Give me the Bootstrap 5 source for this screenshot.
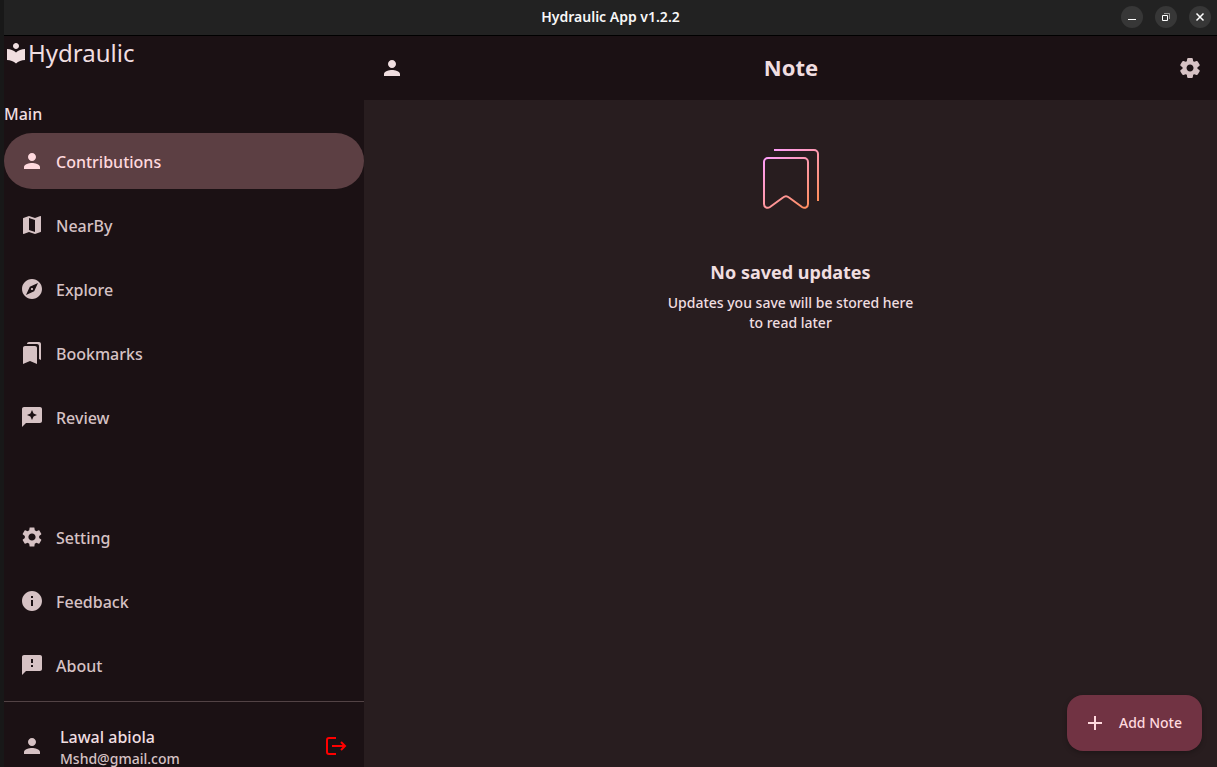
<!DOCTYPE html>
<html lang="en">
<head>
<meta charset="utf-8">
<meta name="viewport" content="width=device-width, initial-scale=1">
<title>Hydraulic App v1.2.2</title>
<link href="https://cdn.jsdelivr.net/npm/bootstrap@5.3.0/dist/css/bootstrap.min.css" rel="stylesheet">
<style>
  body { font-family: "Noto Sans", sans-serif; background: #181818; color: #f0dee0; }
  button { color: inherit; }
  svg { display: block; flex: none; }
  .ico { width: 24px; height: 24px; fill: currentColor; }
  .titlebar { height: 36px; padding-bottom: 2px; background: #222; border-bottom: 1px solid #000; color: #f7f7f7; margin-left: 4px; }
  .titlebar h1 { font-size: 14px; line-height: 20px; font-weight: 600; }
  .win-buttons { right: 6px; gap: 12px; }
  .win-btn { width: 22px; height: 22px; background: #373737; color: #fff; }
  .win-btn svg { width: 22px; height: 22px; fill: none; stroke: currentColor; }
  .shell { margin-left: 4px; min-height: 0; }
  .sidebar { width: 360px; background: #1b1114; }
  .brand { font-size: 24px; line-height: 32px; height: 66px; padding-top: 1px; }
  .brand .ico { margin-top: 4px; }
  .section-name { font-size: 16px; line-height: 24px; font-weight: 500; margin-bottom: 7px; }
  .side-nav { gap: 8px; }
  .side-nav .nav-link { height: 56px; padding: 0 16px; gap: 12px; border-radius: 28px; color: #d6c2c4; font-size: 16px; line-height: 24px; font-weight: 500; }
  .side-nav .nav-link.active { background: #5c3f43; color: #ffd9de; }
  .side-nav .nav-link span { padding-top: 2px; }
  .side-nav .group-start { margin-top: 56px; }
  .account { margin-top: 8px; padding: 23px 16px 0; gap: 16px; border-top: 1px solid #524345; color: #d6c2c4; }
  .account .ico { margin-top: 9px; }
  .who { font-size: 16px; line-height: 24px; font-weight: 500; color: #f0dee0; }
  .mail { font-size: 14px; line-height: 20px; font-weight: 500; }
  .logout { color: #f00; }
  .logout svg { fill: none; stroke: currentColor; stroke-width: 2; }
  .topbar { height: 64px; padding: 0 15px 0 16px; background: #1b1114; }
  .topbar h2 { font-size: 22px; line-height: 28px; font-weight: 700; padding-bottom: 2px; }
  .muted-ico { color: #d6c2c4; }
  .content { background: #281d1f; min-width: 0; }
  .empty { padding-top: 48px; }
  .empty svg { width: 58px; height: 62px; fill: none; stroke-width: 2; margin-bottom: 50px; }
  .empty h3 { font-size: 18px; line-height: 24px; font-weight: 700; margin-bottom: 9px; }
  .empty p { font-size: 14px; line-height: 20px; font-weight: 500; max-width: 260px; }
  .add-note { right: 15px; bottom: 16px; height: 56px; padding: 0 20px 0 16px; gap: 12px; border-radius: 16px; background: #713343; color: #ffd9de; font-size: 14px; line-height: 20px; font-weight: 500; box-shadow: 0 2px 5px rgba(0,0,0,.25); }
  .add-note svg { fill: none; stroke: currentColor; stroke-width: 2; }
</style>
</head>
<body class="vh-100 overflow-hidden d-flex flex-column">
<header class="titlebar flex-shrink-0 position-relative d-flex align-items-center justify-content-center">
  <h1 class="m-0">Hydraulic App v1.2.2</h1>
  <div class="win-buttons position-absolute d-flex">
    <button type="button" class="win-btn border-0 p-0 rounded-circle" aria-label="Minimize"><svg viewBox="0 0 22 22"><path d="M7 13.5h8"/></svg></button>
    <button type="button" class="win-btn border-0 p-0 rounded-circle" aria-label="Restore"><svg viewBox="0 0 22 22"><path d="M7.5 9.5h5v5h-5z"/><path d="M9 7.5h5.5V13" stroke="#999"/></svg></button>
    <button type="button" class="win-btn border-0 p-0 rounded-circle" aria-label="Close"><svg viewBox="0 0 22 22"><path d="M7.5 7.5l7 7m0-7l-7 7" stroke-width="1.5"/></svg></button>
  </div>
</header>
<div class="shell d-flex flex-grow-1">
  <aside class="sidebar flex-shrink-0 d-flex flex-column">
    <div class="brand flex-shrink-0 d-flex align-items-start">
      <svg class="ico" viewBox="0 0 24 24"><path d="M12 11.55C9.64 9.35 6.48 8 3 8v11c3.48 0 6.64 1.35 9 3.55 2.36-2.19 5.52-3.55 9-3.55V8c-3.48 0-6.64 1.35-9 3.55zM12 8c1.66 0 3-1.34 3-3s-1.34-3-3-3-3 1.34-3 3 1.34 3 3 3z"/></svg>
      <span>Hydraulic</span>
    </div>
    <div class="section-name">Main</div>
    <nav class="side-nav nav flex-column flex-nowrap flex-shrink-0" aria-label="Main">
      <a class="nav-link active d-flex align-items-center" href="#" aria-current="page"><svg class="ico" viewBox="0 0 24 24"><path d="M12 12c2.21 0 4-1.79 4-4s-1.79-4-4-4-4 1.79-4 4 1.79 4 4 4zm0 2c-2.67 0-8 1.34-8 4v2h16v-2c0-2.66-5.33-4-8-4z"/></svg><span>Contributions</span></a>
      <a class="nav-link d-flex align-items-center" href="#"><svg class="ico" viewBox="0 0 24 24"><path d="M20.5 3l-.16.03L15 5.1 9 3 3.36 4.9c-.21.07-.36.25-.36.48V20.5c0 .28.22.5.5.5l.16-.03L9 18.9l6 2.1 5.64-1.9c.21-.07.36-.25.36-.48V3.5c0-.28-.22-.5-.5-.5zM15 19l-6-2.11V5l6 2.11V19z"/></svg><span>NearBy</span></a>
      <a class="nav-link d-flex align-items-center" href="#"><svg class="ico" viewBox="0 0 24 24"><path d="M12 10.9c-.61 0-1.1.49-1.1 1.1s.49 1.1 1.1 1.1c.61 0 1.1-.49 1.1-1.1s-.49-1.1-1.1-1.1zM12 2C6.48 2 2 6.48 2 12s4.48 10 10 10 10-4.48 10-10S17.52 2 12 2zm2.19 12.19L6 18l3.81-8.19L18 6l-3.81 8.19z"/></svg><span>Explore</span></a>
      <a class="nav-link d-flex align-items-center" href="#"><svg class="ico" viewBox="0 0 24 24"><path d="M19 18l2 1V3c0-1.1-.9-2-2-2H8.99C7.89 1 7 1.9 7 3h10c1.1 0 2 .9 2 2v13zM15 5H5c-1.1 0-2 .9-2 2v16l7-3 7 3V7c0-1.1-.9-2-2-2z"/></svg><span>Bookmarks</span></a>
      <a class="nav-link d-flex align-items-center" href="#"><svg class="ico" viewBox="0 0 24 24"><path fill-rule="evenodd" d="M20 2H4c-1.1 0-2 .9-2 2v18l4-4h14c1.1 0 2-.9 2-2V4c0-1.1-.9-2-2-2zM13.57 11.57L12 15l-1.57-3.43L7 10l3.43-1.57L12 5l1.57 3.43L17 10z"/></svg><span>Review</span></a>
      <a class="nav-link group-start d-flex align-items-center" href="#"><svg class="ico" viewBox="0 0 24 24"><path d="M19.14 12.94c.04-.3.06-.61.06-.94 0-.32-.02-.64-.07-.94l2.03-1.58c.18-.14.23-.41.12-.61l-1.92-3.32c-.12-.22-.37-.29-.59-.22l-2.39.96c-.5-.38-1.03-.7-1.62-.94l-.36-2.54c-.04-.24-.24-.41-.48-.41h-3.84c-.24 0-.43.17-.47.41l-.36 2.54c-.59.24-1.13.57-1.62.94l-2.39-.96c-.22-.08-.47 0-.59.22L2.74 8.87c-.12.21-.08.47.12.61l2.03 1.58c-.05.3-.09.63-.09.94s.02.64.07.94l-2.03 1.58c-.18.14-.23.41-.12.61l1.92 3.32c.12.22.37.29.59.22l2.39-.96c.5.38 1.03.7 1.62.94l.36 2.54c.05.24.24.41.48.41h3.84c.24 0 .44-.17.47-.41l.36-2.54c.59-.24 1.13-.56 1.62-.94l2.39.96c.22.08.47 0 .59-.22l1.92-3.32c.12-.22.07-.47-.12-.61l-2.01-1.58zM12 15.6c-1.98 0-3.6-1.62-3.6-3.6s1.62-3.6 3.6-3.6 3.6 1.62 3.6 3.6-1.62 3.6-3.6 3.6z"/></svg><span>Setting</span></a>
      <a class="nav-link d-flex align-items-center" href="#"><svg class="ico" viewBox="0 0 24 24"><path d="M12 2C6.48 2 2 6.48 2 12s4.48 10 10 10 10-4.48 10-10S17.52 2 12 2zm1 15h-2v-6h2v6zm0-8h-2V7h2v2z"/></svg><span>Feedback</span></a>
      <a class="nav-link d-flex align-items-center" href="#"><svg class="ico" viewBox="0 0 24 24"><path d="M20 2H4c-1.1 0-2 .9-2 2v18l4-4h14c1.1 0 2-.9 2-2V4c0-1.1-.9-2-2-2zm-7 12h-2v-2h2v2zm0-4h-2V6h2v4z"/></svg><span>About</span></a>
    </nav>
    <div class="account d-flex flex-shrink-0">
      <svg class="ico" viewBox="0 0 24 24"><path d="M12 12c2.21 0 4-1.79 4-4s-1.79-4-4-4-4 1.79-4 4 1.79 4 4 4zm0 2c-2.67 0-8 1.34-8 4v2h16v-2c0-2.66-5.33-4-8-4z"/></svg>
      <div class="flex-grow-1"><div class="who">Lawal abiola</div><div class="mail">Mshd@gmail.com</div></div>
      <button type="button" class="logout bg-transparent border-0 p-0 align-self-start" aria-label="Log out"><svg class="ico" viewBox="0 0 24 24"><path d="M12 4H5a2 2 0 0 0-2 2v12a2 2 0 0 0 2 2h7M8 12h13M17 8l4 4-4 4"/></svg></button>
    </div>
  </aside>
  <main class="content position-relative flex-grow-1 d-flex flex-column">
    <div class="topbar d-flex align-items-center justify-content-between">
      <button type="button" class="bg-transparent border-0 p-0" aria-label="Profile"><svg class="ico" viewBox="0 0 24 24"><path d="M12 12c2.21 0 4-1.79 4-4s-1.79-4-4-4-4 1.79-4 4 1.79 4 4 4zm0 2c-2.67 0-8 1.34-8 4v2h16v-2c0-2.66-5.33-4-8-4z"/></svg></button>
      <h2 class="m-0">Note</h2>
      <button type="button" class="muted-ico bg-transparent border-0 p-0" aria-label="Settings"><svg class="ico" viewBox="0 0 24 24"><path d="M19.5 12c0-.23-.01-.45-.03-.68l1.86-1.41c.4-.3.51-.86.26-1.3l-1.87-3.23c-.25-.44-.79-.62-1.25-.42l-2.15.91c-.37-.26-.76-.49-1.17-.68l-.29-2.31c-.06-.5-.49-.88-.99-.88h-3.73c-.51 0-.94.38-1 .88l-.29 2.31c-.41.19-.8.42-1.17.68l-2.15-.91c-.46-.2-1-.02-1.25.42L2.41 8.62c-.25.44-.14.99.26 1.3l1.86 1.41c-.02.22-.03.44-.03.67s.01.45.03.68l-1.86 1.41c-.4.3-.51.86-.26 1.3l1.87 3.23c.25.44.79.62 1.25.42l2.15-.91c.37.26.76.49 1.17.68l.29 2.31c.06.5.49.88.99.88h3.73c.5 0 .93-.38.99-.88l.29-2.31c.41-.19.8-.42 1.17-.68l2.15.91c.46.2 1 .02 1.25-.42l1.87-3.23c.25-.44.14-.99-.26-1.3l-1.86-1.41c.03-.23.04-.45.04-.68zm-7.46 3.5c-1.93 0-3.5-1.57-3.5-3.5s1.57-3.5 3.5-3.5 3.5 1.57 3.5 3.5-1.57 3.5-3.5 3.5z"/></svg></button>
    </div>
    <section class="empty d-flex flex-column align-items-center text-center">
      <svg viewBox="0 0 58 62" stroke="url(#glow)"><defs><linearGradient id="glow" gradientUnits="userSpaceOnUse" x1="4" y1="6" x2="50" y2="58"><stop offset="0" stop-color="#ff9fff"/><stop offset=".5" stop-color="#ff98a8"/><stop offset="1" stop-color="#ff8c5a"/></linearGradient></defs><path d="M6 10H42a4 4 0 0 1 4 4V56c0 3-3 5-6 3L27 49.5q-3-2.500-6 0L8 59c-3 2-6 0-6-3V14a4 4 0 0 1 4-4zM12 2H52a4 4 0 0 1 4 4V53"/></svg>
      <h3>No saved updates</h3>
      <p class="m-0">Updates you save will be stored here to read later</p>
    </section>
    <button type="button" class="add-note position-absolute d-flex align-items-center border-0"><svg class="ico" viewBox="0 0 24 24"><path d="M12 5v14M5 12h14"/></svg><span>Add Note</span></button>
  </main>
</div>
<script src="https://cdn.jsdelivr.net/npm/bootstrap@5.3.0/dist/js/bootstrap.bundle.min.js"></script>
</body>
</html>
